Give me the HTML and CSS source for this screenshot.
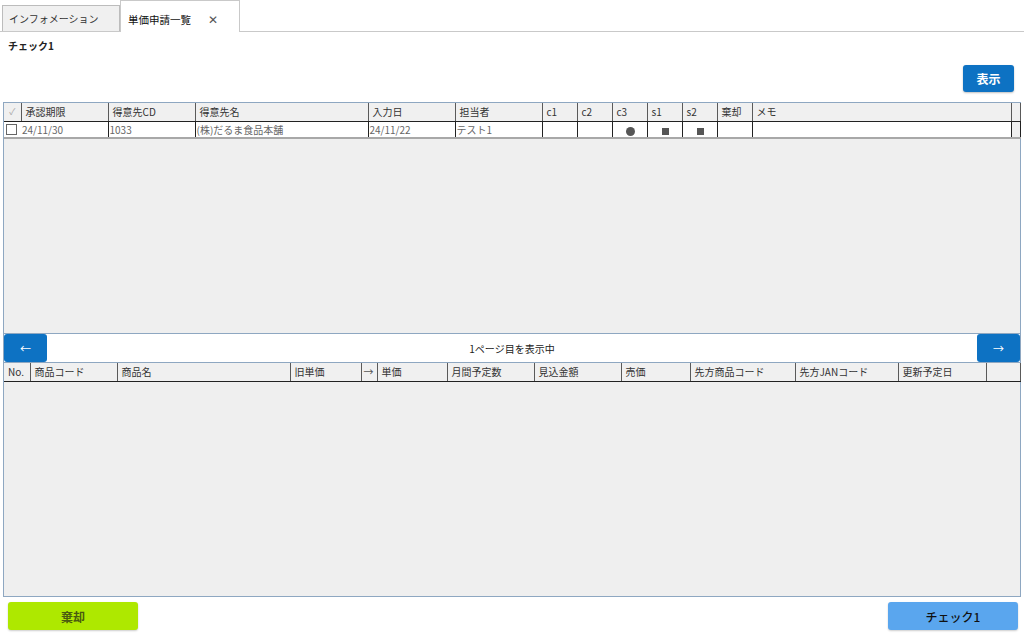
FILE: index.html
```html
<!DOCTYPE html>
<html lang="ja">
<head>
  <meta charset="UTF-8" />
  <title>単価申請一覧</title>
  <link rel="stylesheet" href="styles.css">
</head>
<body>
  <div class="tabs">
    <div class="tab">インフォメーション</div>
    <div class="tab active">単価申請一覧 <span class="close">✕</span></div>
  </div>

  <div class="page">
    <div class="check-title">チェック1</div>
    <div class="toolbar">
      <button class="btn-show">表示</button>
    </div>

    <div class="frame">
      <div class="grid1">
        <table class="grid">
          <colgroup>
            <col style="width:17px"><col style="width:87px"><col style="width:87px"><col style="width:173px">
            <col style="width:87px"><col style="width:87px"><col style="width:35px"><col style="width:35px">
            <col style="width:35px"><col style="width:35px"><col style="width:35px"><col style="width:35px">
            <col style="width:259px"><col style="width:9px">
          </colgroup>
          <tr class="head">
            <th class="chk-h">✓</th><th>承認期限</th><th>得意先CD</th><th>得意先名</th>
            <th>入力日</th><th>担当者</th><th>c1</th><th>c2</th><th>c3</th><th>s1</th><th>s2</th><th>棄却</th><th>メモ</th><th></th>
          </tr>
          <tr class="row">
            <td class="chk"><span class="box"></span></td><td>24/11/30</td><td>1033</td><td>(株)だるま食品本舗</td>
            <td>24/11/22</td><td>テスト1</td><td></td><td></td>
            <td class="mark"><span class="dot"></span></td>
            <td class="mark"><span class="sq"></span></td>
            <td class="mark"><span class="sq"></span></td>
            <td></td><td></td><td class="blank"></td>
          </tr>
        </table>
      </div>

      <div class="pager">
        <button class="pg-btn">&larr;</button>
        <div class="pg-text">1ページ目を表示中</div>
        <button class="pg-btn">&rarr;</button>
      </div>

      <div class="grid2">
        <table class="grid">
          <colgroup>
            <col style="width:26px"><col style="width:87px"><col style="width:173px"><col style="width:71px">
            <col style="width:16px"><col style="width:70px"><col style="width:87px"><col style="width:87px">
            <col style="width:69px"><col style="width:105px"><col style="width:103px"><col style="width:88px">
            <col style="width:34px">
          </colgroup>
          <tr class="head">
            <th>No.</th><th>商品コード</th><th>商品名</th><th>旧単価</th><th class="arrow-h">→</th><th>単価</th>
            <th>月間予定数</th><th>見込金額</th><th>売価</th><th>先方商品コード</th><th>先方JANコード</th><th>更新予定日</th><th></th>
          </tr>
        </table>
      </div>
    </div>

    <div class="footer">
      <button class="btn-reject">棄却</button>
      <button class="btn-check">チェック1</button>
    </div>
  </div>
</body>
</html>
```

FILE: styles.css
```css
* {
  margin: 0;
  padding: 0;
  box-sizing: border-box;
  font-family: "Noto Sans CJK JP", "Noto Sans", sans-serif;
}

body {
  background: #fff;
  font-size: 11px;
  color: #222;
  width: 1024px;
  height: 635px;
  overflow: hidden;
}

.tabs {
  display: flex;
  align-items: flex-end;
  height: 32px;
  border-bottom: 1px solid #c9c9c9;
}

.tab {
  margin-left: 2px;
  width: 118px;
  height: 26px;
  background: #f0f0f0;
  border: 1px solid #bcbcbc;
  border-bottom: none;
  padding: 5px 0 0 6px;
  font-size: 10px;
  color: #333;
}

.tab.active {
  margin-left: 0;
  width: 120px;
  height: 32px;
  background: #fff;
  border-color: #c9c9c9;
  margin-bottom: -1px;
  padding: 9px 0 0 7px;
  font-size: 10.5px;
  color: #111;
}

.close {
  margin-left: 15px;
  font-size: 12px;
  color: #555;
}

.check-title {
  padding: 6px 0 0 8px;
  height: 22px;
  font-size: 10px;
  font-weight: bold;
}

.toolbar {
  display: flex;
  justify-content: flex-end;
  padding: 11px 10px 0 0;
  height: 48px;
}

.btn-show {
  width: 51px;
  height: 27px;
  border: none;
  border-radius: 3px;
  background: #0d72c3;
  color: white;
  font-weight: bold;
  font-size: 12px;
  box-shadow: 0 1px 2px rgba(0,0,0,0.25);
}

.frame {
  margin: 0 3px;
  border: 1px solid #8ea7c1;
  height: 495px;
  display: flex;
  flex-direction: column;
}

.grid1 {
  height: 231px;
  background: #efefef;
  border-bottom: 1px solid #8ea7c1;
}

.grid2 {
  flex: 1;
  background: #efefef;
}

.grid {
  table-layout: fixed;
  border-collapse: collapse;
  width: 1016px;
}

.grid th,
.grid td {
  height: 18px;
  padding: 0 0 0 4px;
  text-align: left;
  font-weight: normal;
  white-space: nowrap;
  overflow: hidden;
  font-size: 10px;
}

.head th {
  background: #f0f0f0;
  color: #333;
  border-right: 1px solid #5a5a5a;
  border-bottom: 1px solid #222;
}

.head th.chk-h {
  color: #aaa;
  font-size: 9px;
  padding: 0;
  text-align: center;
}

.head th.arrow-h {
  padding-left: 2px;
  color: #555;
}

.row td {
  background: #fff;
  color: #666;
  height: 17px;
  padding-left: 1px;
  border-right: 1px solid #222;
  border-bottom: 2px solid #a8a8a8;
}

.row td.chk {
  padding: 0 0 0 2px;
  border-right: none;
}

.row td.blank {
  background: #efefef;
}

.box {
  display: block;
  width: 11px;
  height: 11px;
  border: 1px solid #666;
  background: #fff;
}

.mark {
  text-align: center !important;
}

.dot {
  display: inline-block;
  width: 9px;
  height: 9px;
  border-radius: 50%;
  background: #555;
  vertical-align: middle;
}

.sq {
  display: inline-block;
  width: 7px;
  height: 7px;
  background: #555;
  vertical-align: middle;
}

.pager {
  display: flex;
  align-items: center;
  height: 29px;
  background: #fff;
  border-bottom: 1px solid #8ea7c1;
}

.pg-btn {
  width: 43px;
  height: 28px;
  border: none;
  background: #0d72c3;
  color: white;
  font-size: 11px;
  border-radius: 3px;
}

.pg-text {
  flex: 1;
  text-align: center;
  font-size: 10px;
  color: #222;
}

.footer {
  display: flex;
  justify-content: space-between;
  padding: 5px 6px 0 8px;
}

.footer button {
  width: 130px;
  height: 28px;
  border: none;
  border-radius: 3px;
  font-size: 12px;
  box-shadow: 0 1px 2px rgba(0,0,0,0.2);
}

.btn-reject {
  background: #aee800;
  color: #4a5a10;
  font-weight: bold;
}

.btn-check {
  background: #5aa6ee;
  color: #111;
  font-weight: 500;
}
```
